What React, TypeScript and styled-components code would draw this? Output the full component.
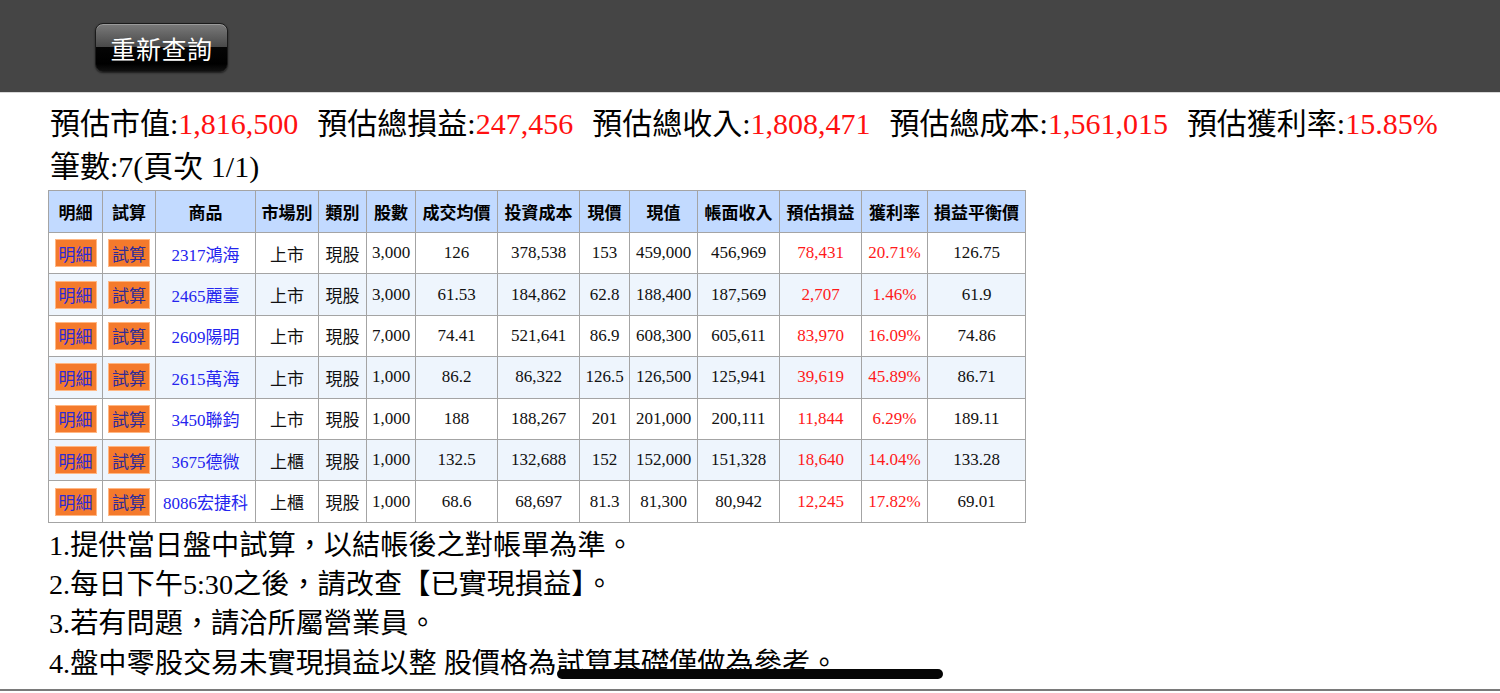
import React from "react";
import styled, { createGlobalStyle } from "styled-components";

const Global = createGlobalStyle`
  html, body { margin: 0; padding: 0; background: #ffffff; }
  body {
    font-family: "Liberation Serif", "Noto Sans CJK TC", serif;
    color: #000;
    overflow: hidden;
  }
`;

const Page = styled.div`
  width: 1500px;
  height: 693px;
  position: relative;
  overflow: hidden;
  background: #fff;
`;

const TopBar = styled.header`
  height: 93px;
  background: #454545;
  display: flex;
  align-items: flex-start;
  padding: 23px 0 0 95px;
  box-sizing: border-box;
  border-bottom: 1px solid #d8d8d8;
`;

const GlossButton = styled.button`
  width: 133px;
  height: 49px;
  border-radius: 8px;
  border: 1px solid #1a1a1a;
  background: linear-gradient(
    to bottom,
    #7a7a7a 0%,
    #4a4a4a 48%,
    #050505 50%,
    #000000 85%,
    #111 100%
  );
  box-shadow: 0 1px 2px rgba(0, 0, 0, 0.6), inset 0 1px 0 rgba(255, 255, 255, 0.25);
  color: #fff;
  font-family: "Noto Sans CJK TC", sans-serif;
  font-size: 25px;
  letter-spacing: 0.5px;
  padding: 0;
  display: flex;
  align-items: center;
  justify-content: center;
`;

const Content = styled.main`
  padding: 9px 0 0 48px;
`;

const Summary = styled.div`
  font-size: 30px;
  line-height: 43px;
  padding-left: 2px;
  margin-bottom: 2px;
`;

const Item = styled.span`
  margin-right: 19px;
  white-space: nowrap;
`;

const Red = styled.span`
  color: #ff1010;
`;

const Grid = styled.table`
  border-collapse: collapse;
  table-layout: fixed;
  width: 977px;
  border: 1px solid #9a9a9a;
  font-size: 17px;
`;

const HeadRow = styled.tr`
  height: 42px;
  background: #c2daff;
`;

const Row = styled.tr<{ $alt: boolean }>`
  height: 41.4px;
  background: ${(p) => (p.$alt ? "#eef5fd" : "#ffffff")};
`;

const Th = styled.th`
  border: 1px solid #a4a4a4;
  font-family: "Noto Sans CJK TC", sans-serif;
  font-weight: 700;
  font-size: 17px;
  padding: 0;
  white-space: nowrap;
  text-align: center;
`;

const Td = styled.td<{ $tone?: "red" | "blue" }>`
  border: 1px solid #a4a4a4;
  padding: 0;
  text-align: center;
  white-space: nowrap;
  color: ${(p) => (p.$tone === "red" ? "#ff1a1a" : p.$tone === "blue" ? "#2424ee" : "#111")};
`;

const ActionButton = styled.span<{ $dark?: boolean }>`
  display: inline-flex;
  align-items: center;
  justify-content: center;
  width: 42px;
  height: 28px;
  box-sizing: border-box;
  background: #f47a2c;
  border: 1px solid #ffb784;
  color: ${(p) => (p.$dark ? "#2e2a98" : "#2a2ad4")};
  font-family: "Noto Sans CJK TC", sans-serif;
  font-size: 17px;
  vertical-align: middle;
`;

const Notes = styled.div`
  font-size: 28.2px;
  line-height: 39.3px;
  padding-top: 3px;
  padding-left: 1px;
`;

const HomeIndicator = styled.div`
  position: absolute;
  left: 557px;
  top: 669px;
  width: 386px;
  height: 10px;
  border-radius: 5px;
  background: #050505;
`;

const BottomEdge = styled.div`
  position: absolute;
  left: 0;
  right: 0;
  top: 689px;
  height: 2px;
  background: #7a7a7a;
`;

const cols = [54, 53, 100, 63, 48, 49, 82, 82, 50, 68, 82, 82, 66, 98];

const headers = [
  "明細",
  "試算",
  "商品",
  "市場別",
  "類別",
  "股數",
  "成交均價",
  "投資成本",
  "現價",
  "現值",
  "帳面收入",
  "預估損益",
  "獲利率",
  "損益平衡價",
];

type Rec = [string, string, string, string, string, string, string, string, string, string, string, string];

const rows: Rec[] = [
  ["2317鴻海", "上市", "現股", "3,000", "126", "378,538", "153", "459,000", "456,969", "78,431", "20.71%", "126.75"],
  ["2465麗臺", "上市", "現股", "3,000", "61.53", "184,862", "62.8", "188,400", "187,569", "2,707", "1.46%", "61.9"],
  ["2609陽明", "上市", "現股", "7,000", "74.41", "521,641", "86.9", "608,300", "605,611", "83,970", "16.09%", "74.86"],
  ["2615萬海", "上市", "現股", "1,000", "86.2", "86,322", "126.5", "126,500", "125,941", "39,619", "45.89%", "86.71"],
  ["3450聯鈞", "上市", "現股", "1,000", "188", "188,267", "201", "201,000", "200,111", "11,844", "6.29%", "189.11"],
  ["3675德微", "上櫃", "現股", "1,000", "132.5", "132,688", "152", "152,000", "151,328", "18,640", "14.04%", "133.28"],
  ["8086宏捷科", "上櫃", "現股", "1,000", "68.6", "68,697", "81.3", "81,300", "80,942", "12,245", "17.82%", "69.01"],
];

const summary: [string, string][] = [
  ["預估市值:", "1,816,500"],
  ["預估總損益:", "247,456"],
  ["預估總收入:", "1,808,471"],
  ["預估總成本:", "1,561,015"],
  ["預估獲利率:", "15.85%"],
];

const notes = [
  "1.提供當日盤中試算，以結帳後之對帳單為準。",
  "2.每日下午5:30之後，請改查【已實現損益】。",
  "3.若有問題，請洽所屬營業員。",
  "4.盤中零股交易未實現損益以整 股價格為試算基礎僅做為參考。",
];

export default function App() {
  return (
    <Page>
      <Global />
      <TopBar>
        <GlossButton>重新查詢</GlossButton>
      </TopBar>
      <Content>
        <Summary>
          {summary.map(([label, value]) => (
            <Item key={label}>
              {label}
              <Red>{value}</Red>
            </Item>
          ))}
          <br />
          筆數:7(頁次 1/1)
        </Summary>
        <Grid>
          <colgroup>
            {cols.map((w, i) => (
              <col key={i} style={{ width: w }} />
            ))}
          </colgroup>
          <thead>
            <HeadRow>
              {headers.map((h) => (
                <Th key={h}>{h}</Th>
              ))}
            </HeadRow>
          </thead>
          <tbody>
            {rows.map((r, i) => (
              <Row key={r[0]} $alt={i % 2 === 1}>
                <Td>
                  <ActionButton>明細</ActionButton>
                </Td>
                <Td>
                  <ActionButton $dark>試算</ActionButton>
                </Td>
                <Td $tone="blue">{r[0]}</Td>
                <Td>{r[1]}</Td>
                <Td>{r[2]}</Td>
                <Td>{r[3]}</Td>
                <Td>{r[4]}</Td>
                <Td>{r[5]}</Td>
                <Td>{r[6]}</Td>
                <Td>{r[7]}</Td>
                <Td>{r[8]}</Td>
                <Td $tone="red">{r[9]}</Td>
                <Td $tone="red">{r[10]}</Td>
                <Td>{r[11]}</Td>
              </Row>
            ))}
          </tbody>
        </Grid>
        <Notes>
          {notes.map((n) => (
            <div key={n}>{n}</div>
          ))}
        </Notes>
      </Content>
      <HomeIndicator />
      <BottomEdge />
    </Page>
  );
}
